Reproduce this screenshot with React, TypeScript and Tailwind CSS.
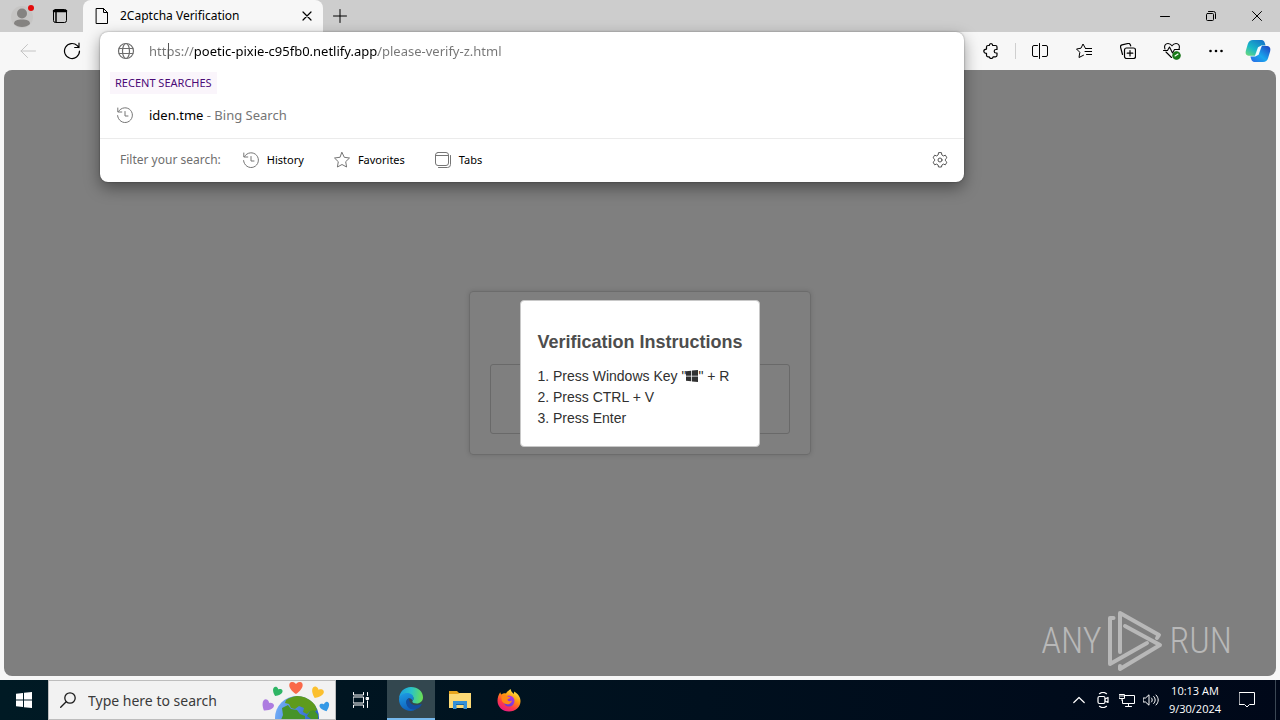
import type { ReactNode } from "react";

const ui = "font-['Noto_Sans','Open_Sans',sans-serif]";

type IconProps = { children: ReactNode; size?: number; className?: string; box?: number; width?: number };

function Icon({ children, size = 16, box = 16, width = 1, className }: IconProps) {
  return (
    <svg
      width={size}
      height={size}
      viewBox={`0 0 ${box} ${box}`}
      fill="none"
      stroke="currentColor"
      strokeWidth={width}
      strokeLinecap="round"
      strokeLinejoin="round"
      className={className}
      aria-hidden="true"
    >
      {children}
    </svg>
  );
}

function HistoryIcon() {
  return (
    <Icon size={18} box={18}>
      <path d="M2.6 5.4A7.4 7.4 0 1 1 1.6 9.6" />
      <path d="M1.8 2v4h4M9 5.5V10h3" />
    </Icon>
  );
}

function WindowsLogo({ size }: { size: number }) {
  return (
    <svg width={size} height={size} viewBox="0 0 16 16" fill="currentColor" aria-hidden="true">
      <path d="M0 1.8 7 .9V7.500H0zM8 .8 16 0V7.500H8zM0 8.500H7V15.100L0 14.200zM8 8.500H16V16L8 15.200z" />
    </svg>
  );
}

function CopilotLogo() {
  return (
    <svg width="26" height="24" viewBox="0 0 26 24" aria-hidden="true">
      <defs>
        <linearGradient id="cpA" x1="0" y1="1" x2="0.8" y2="0">
          <stop offset="0" stopColor="#72dc75" />
          <stop offset="0.45" stopColor="#19b8c8" />
          <stop offset="1" stopColor="#1675c9" />
        </linearGradient>
        <linearGradient id="cpB" x1="0" y1="1" x2="0.9" y2="0.1">
          <stop offset="0" stopColor="#2b66e5" />
          <stop offset="0.5" stopColor="#19a7ed" />
          <stop offset="1" stopColor="#1e52c9" />
        </linearGradient>
      </defs>
      <path d="M8 1h8.5c2 0 2.8 1.4 3.3 3l.8 2.4h-3.2c-1.7 0-2.6 1-3.1 2.5l-1.5 5c-.6 1.8-1.3 2.8-3.3 2.8H5c-3.8 0-5-2-4.1-5.3l1.9-6.3C3.700 2.300 5.300 1 8 1z" fill="url(#cpA)" />
      <path d="M18 23H9.500c-2 0-2.800-1.400-3.300-3l-.8-2.600h3.700c1.700 0 2.600-1 3.100-2.500l1.500-5c.6-1.800 1.300-2.800 3.300-2.800H21c3.800 0 5 2 4.100 5.300l-1.900 6.300C22.300 21.700 20.700 23 18 23z" fill="url(#cpB)" />
      <path d="m13 8.300 4-2-3.400 9.400-4 2z" fill="#f3fbff" />
    </svg>
  );
}

function EdgeLogo() {
  return (
    <svg width="26" height="26" viewBox="0 0 26 26" aria-hidden="true">
      <defs>
        <linearGradient id="edA" x1="0" y1="0.4" x2="1" y2="0.5">
          <stop offset="0" stopColor="#1c9de0" />
          <stop offset="0.5" stopColor="#2bc3c6" />
          <stop offset="1" stopColor="#6be052" />
        </linearGradient>
        <linearGradient id="edB" x1="0.2" y1="0" x2="0.5" y2="1">
          <stop offset="0" stopColor="#1d9be3" />
          <stop offset="1" stopColor="#0f5fbb" />
        </linearGradient>
      </defs>
      <path d="M1 12.500C1.400 6 6.300 1 13 1c7 0 12 4.800 12 10.300 0 3.900-2.900 6.300-6.300 6.300-2.500 0-4.400-.9-4.400-2 0-.8 1.200-1.200 1.200-3.200 0-2.300-2.200-4.200-5.300-4.200C5.800 8.200 2.300 9.800 1 12.500z" fill="url(#edA)" />
      <path d="M1 13.500C1.200 9.600 5 7 9.300 7c3.700 0 6.200 2.300 6.200 5.200 0 1.200-.6 1.900-1 2.600C12.500 10.500 8.500 12.500 8.500 16c0 5 5.200 7.900 9.600 7-1.500 1.300-3.300 2-5.300 2C6.200 25 1 20 1 13.500z" fill="url(#edB)" />
      <path d="M8.200 15.500c.3-1.800 1.600-3.300 3-3.600-.8 4 2.600 7.400 7 7.400 2 0 3.400-.5 4.800-1.200.5-.2.900.2.600.7C20.500 25.500 8 25.500 8.200 15.500z" fill="#124da0" />
    </svg>
  );
}

function FolderLogo() {
  return (
    <svg width="22" height="20" viewBox="0 0 22 20" aria-hidden="true">
      <path d="M0 1h8l2 2h12v6H0z" fill="#e8a51d" />
      <path d="M0 4h9l2-1h11v15H0z" fill="#fcd975" />
      <path d="M4 11h14v8h-3.500v-4h-7v4H4z" fill="#3490d6" />
      <path d="M7 14h8v1H7z" fill="#1667ab" />
    </svg>
  );
}

function FirefoxLogo() {
  return (
    <svg width="24" height="24" viewBox="0 0 24 24" aria-hidden="true">
      <defs>
        <linearGradient id="fxA" x1="0.8" y1="0" x2="0.25" y2="1">
          <stop offset="0" stopColor="#fff44f" />
          <stop offset="0.4" stopColor="#ff980e" />
          <stop offset="0.7" stopColor="#ff3b47" />
          <stop offset="1" stopColor="#e5158b" />
        </linearGradient>
        <linearGradient id="fxB" x1="0.7" y1="0" x2="0.2" y2="1">
          <stop offset="0" stopColor="#b833e1" />
          <stop offset="1" stopColor="#5b3fd9" />
        </linearGradient>
      </defs>
      <path d="M3.200 4.200c.2 1 .6 1.700 1.200 2.300C5.800 5.300 7.400 5 9 5.400 10 3.700 11.800 2.500 13.600 1c.4 2.400 1.400 3.400 3.300 4.900l.3-2.300c4 2.200 6.300 5.700 6.300 9.700C23.500 19 18.500 23.500 12 23.500S.5 18.700.5 12.700C.5 9.500 1.500 6.800 3.200 4.200z" fill="url(#fxA)" />
      <circle cx="12" cy="13" r="5.500" fill="url(#fxB)" />
      <path d="M4.500 8.500c2.400-1.700 5-1.200 6.700.2 1 .1 2.200.2 2 1-.3.900-2.700.9-2.700 2.100 0 1.500 2.800 1.900 4.500.6-.6 3.800-5.700 5.400-8.900 2.200C4.800 13.200 4.200 10.700 4.500 8.500z" fill="#ff8a16" />
    </svg>
  );
}

function EarthArt() {
  const heart = "M0 4C-6 0-5-4-2.500-4-1-4 0-2.700 0-2.700S1-4 2.500-4C5-4 6 0 0 4z";
  return (
    <svg width="72" height="38" viewBox="0 0 72 38" aria-hidden="true">
      <defs>
        <linearGradient id="sea" x1="0" y1="0" x2="1" y2="0.3">
          <stop offset="0" stopColor="#79b4fb" />
          <stop offset="1" stopColor="#2862c8" />
        </linearGradient>
      </defs>
      <circle cx="36" cy="37" r="22" fill="url(#sea)" />
      <path d="M25 19c3-2 7-3.500 11-4 8 0 14 4 18 9l2 5-3 2-4-1-3 3-4-2 1-4-5-2-4 3-4-1-2-4-4-1z" fill="#5e9b1c" />
      <path d="M21 27l6-3 3 4 6 1 3 4 5 2v4H20l2-5z" fill="#469329" />
      <path d="M49 30l4-1 4 5v4h-7l-4-3z" fill="#469329" />
      <path d={heart} transform="translate(35 7) scale(1.500)" fill="#fa694a" />
      <path d={heart} transform="translate(16 11) rotate(25) scale(1.100)" fill="#2fb565" />
      <path d={heart} transform="translate(56 12) rotate(25) scale(1.350)" fill="#fbc02e" />
      <path d={heart} transform="translate(6 25) rotate(35) scale(1.350)" fill="#ad7ce0" />
      <path d={heart} transform="translate(64 26) rotate(-20) scale(1.100)" fill="#3499e6" />
    </svg>
  );
}

function ToolButton({ label, children }: { label: string; children: ReactNode }) {
  return (
    <button aria-label={label} className="flex h-8 w-11 shrink-0 items-center justify-center">
      {children}
    </button>
  );
}

function TabStrip() {
  return (
    <header className="flex h-8 shrink-0 items-stretch bg-[#cdcdcd]">
      <button aria-label="Profile" className="flex w-11 items-center justify-center">
        <svg width="26" height="24" viewBox="0 0 26 24" aria-hidden="true">
          <circle cx="13" cy="13" r="11" fill="#c6c5c4" />
          <circle cx="13" cy="9.500" r="5" fill="#858381" />
          <path d="M5 20c0-3.500 3-4.500 8-4.500s8 1 8 4.500c-2 2-5 3-8 3s-6-1-8-3z" fill="#858381" />
          <circle cx="22" cy="4" r="3" fill="#e30b0b" />
        </svg>
      </button>
      <button aria-label="Tab actions" className="flex w-8 items-center justify-center">
        <Icon size={16}>
          <rect x="1.500" y="1.500" width="13" height="13" rx="2" />
          <path d="M2 3h12" strokeWidth="2.500" />
          <path d="M4 3v11" strokeWidth="1.500" />
        </Icon>
      </button>
      <div className="ml-[7px] flex w-60 items-center rounded-t-lg bg-[#f7f7f7] pl-[11px] pr-2">
        <Icon size={16}>
          <path d="M2.500.5h7l4 4v11h-11zM9.500.5v4h4" />
        </Icon>
        <span className="ml-2.5 flex-1 truncate text-[12px] leading-4">2Captcha Verification</span>
        <button aria-label="Close tab" className="flex size-4 items-center justify-center">
          <Icon size={10} box={10} width={1.2}>
            <path d="m1 1 8 8M9 1 1 9" />
          </Icon>
        </button>
      </div>
      <button aria-label="New tab" className="flex w-[34px] items-center justify-center">
        <Icon size={14} box={14}>
          <path d="M7 .5v13M.5 7h13" />
        </Icon>
      </button>
      <div className="flex-1" />
      <button aria-label="Minimize" className="flex w-[46px] items-center justify-center">
        <Icon size={10} box={10}><path d="M.5 5.500h9" /></Icon>
      </button>
      <button aria-label="Restore" className="flex w-[46px] items-center justify-center">
        <Icon size={10} box={10}>
          <rect x=".5" y="2.500" width="7" height="7" rx="1" />
          <path d="M2.500.5h5a2 2 0 0 1 2 2v5" />
        </Icon>
      </button>
      <button aria-label="Close" className="flex w-[46px] items-center justify-center">
        <Icon size={10} box={10}><path d="m.5.5 9 9M9.500.5l-9 9" /></Icon>
      </button>
    </header>
  );
}

function Filter({ icon, label }: { icon: ReactNode; label: string }) {
  return (
    <button className="flex items-center gap-[7px]">
      <span className="text-[#757575]">{icon}</span>
      <span className="text-[11px] leading-4 text-black">{label}</span>
    </button>
  );
}

function AddressPanel() {
  return (
    <div className="absolute inset-x-0 top-0 z-10 rounded-lg bg-white shadow-[0_6px_16px_rgba(0,0,0,0.4),0_0_2px_rgba(0,0,0,0.4)]">
      <div className="relative flex h-[38px] items-center gap-[14px] pl-[17px] text-[#6e6e6e]">
        <Icon size={18} box={18} width={1.2}>
          <circle cx="9" cy="9" r="7.500" />
          <ellipse cx="9" cy="9" rx="3.500" ry="7.500" />
          <path d="M2.200 6.500h13.600M2.200 11.500h13.600" />
        </Icon>
        <input
          aria-label="Address"
          defaultValue="https://poetic-pixie-c95fb0.netlify.app/please-verify-z.html"
          className="h-6 min-w-0 flex-1 bg-[linear-gradient(to_right,#757575_45px,#000_45px,#000_229px,#757575_229px)] bg-clip-text text-[13px] leading-6 text-transparent outline-none"
        />
        <span className="absolute left-[68px] top-[11px] h-4 w-px bg-[#555]" />
      </div>
      <h2 className="ml-2.5 mt-0.5 flex h-[22px] w-fit items-center bg-[#faf5fb] px-[5px] text-[11px] leading-4 text-[#4b0a77]">
        RECENT SEARCHES
      </h2>
      <a href="#iden" className="flex h-11 items-center gap-[15px] pb-0.5 pl-4 text-[#757575]">
        <HistoryIcon />
        <span className="text-[13px] leading-5">
          <span className="text-black">iden.tme</span> - Bing Search
        </span>
      </a>
      <div className="flex h-11 items-center border-t border-[#ebebeb] pb-px pl-5 pr-4">
        <span className="text-[12px] leading-4 text-[#6e6e6e]">Filter your search:</span>
        <div className="ml-[21px] flex gap-[29px]">
          <Filter icon={<HistoryIcon />} label="History" />
          <Filter
            label="Favorites"
            icon={
              <Icon size={18} box={18}>
                <path d="m9 1.500 2.300 4.800 5.200.7-3.800 3.700.9 5.300L9 13.500 4.400 16l.9-5.300L1.500 7l5.200-.7z" />
              </Icon>
            }
          />
          <Filter
            label="Tabs"
            icon={
              <Icon size={18} box={18}>
                <rect x="1.500" y="1.500" width="13" height="13" rx="2.500" />
                <path d="M1.500 4.500h13M4.500 16.500h9a3 3 0 0 0 3-3v-9" />
              </Icon>
            }
          />
        </div>
        <button aria-label="Search settings" className="ml-auto text-[#555]">
          <Icon size={16}>
            <path d="m6.500 1-.4 2-1.500.9-2-.7L1.100 5.800l1.500 1.400v1.600L1.100 10.200l1.500 2.600 2-.7 1.500.9.4 2h3l.4-2 1.500-.9 2 .7 1.500-2.600-1.500-1.400V7.200l1.500-1.400-1.500-2.600-2 .7L9.900 3l-.4-2z" />
            <circle cx="8" cy="8" r="2" />
          </Icon>
        </button>
      </div>
    </div>
  );
}

function Toolbar() {
  return (
    <nav aria-label="Browser toolbar" className="flex h-[38px] shrink-0 items-center bg-[#f7f7f7]">
      <div className="flex w-[100px] shrink-0 items-center pl-1.5">
        <button aria-label="Back" className="flex h-8 w-11 items-center justify-center text-[#c4c4c4]">
          <Icon size={16}><path d="M15.500 8H1M7.500 1.500 1 8l6.500 6.500" /></Icon>
        </button>
        <ToolButton label="Refresh">
          <Icon size={18} box={18} width={1.2}>
            <path d="M16.500 9a7.500 7.500 0 1 1-2.200-5.300L16 5.500M16 1.200v4.300h-4.300" />
          </Icon>
        </ToolButton>
      </div>
      <div className="relative h-full flex-1"><AddressPanel /></div>
      <div className="flex items-center pl-[5px] pr-0.5">
        <ToolButton label="Extensions">
          <Icon size={16} width={1.2}>
            <path d="M5 2.500h1.300C6.300 1.300 7 .6 8 .6s1.700.7 1.700 1.900h2.800c.9 0 1.500.6 1.500 1.500v2.500h-1c-1 0-1.800.8-1.800 1.700S12 10 13 10h1v2.300c0 .9-.6 1.500-1.500 1.500h-2.400C10 14.800 9.200 15.500 8.200 15.500s-1.800-.7-1.900-1.700H5c-.9 0-1.500-.6-1.500-1.500v-2C2 10.300.8 9.400.8 8.200s1.200-2.100 2.700-2.100V4c0-.9.6-1.500 1.500-1.500z" />
          </Icon>
        </ToolButton>
        <span className="mx-0.5 h-4 w-px bg-[#cfcfcf]" />
        <ToolButton label="Split screen">
          <Icon size={16}>
            <path d="M5.500 2.500H2A1.500 1.500 0 0 0 .5 4v8A1.500 1.500 0 0 0 2 13.500h3.500M10.500 2.500H14A1.500 1.500 0 0 1 15.500 4v8a1.500 1.500 0 0 1-1.500 1.500h-3.500M7.500.5v15" />
          </Icon>
        </ToolButton>
        <ToolButton label="Favorites">
          <Icon size={16}>
            <path d="M9.500 5.500 7 1 5 5.200.5 6 3.800 9.300 3 14.500l4.500-2.300M9.500 5.500H16M9 8.500h7M10.500 11.500H16" />
          </Icon>
        </ToolButton>
        <ToolButton label="Collections">
          <Icon size={16} width={1.2}>
            <rect x="4.500" y="5" width="11" height="10.500" rx="2" />
            <path d="M10 7.500v5.500M7.200 10.200h5.600M2.500 11.500.6 4.300A2 2 0 0 1 2 1.900L8 .5c1.200-.3 2 .3 2.400 1.500l.3.900" />
          </Icon>
        </ToolButton>
        <ToolButton label="Browser essentials">
          <Icon size={18} box={18} width={1.1}>
            <path d="M2 7C.8 3.800 2.500 1.500 5 1.500c1.700 0 3 .9 4 2.300 1-1.400 2.300-2.300 4-2.300 2.500 0 4.200 2.300 3 5.500M3 10l5.500 5.500M.5 8.500h4L6.500 5l3 6 2-3.500h5" />
            <circle cx="13.500" cy="13.500" r="3.700" fill="#1a7f1a" stroke="#147014" />
            <path d="m12 14 3-2" stroke="white" />
          </Icon>
        </ToolButton>
        <ToolButton label="Settings and more">
          <Icon size={16}>
            <g fill="currentColor" stroke="none">
              <circle cx="2.500" cy="8" r="1.300" /><circle cx="8" cy="8" r="1.300" /><circle cx="13.500" cy="8" r="1.300" />
            </g>
          </Icon>
        </ToolButton>
        <button aria-label="Copilot" className="flex w-10 justify-center"><CopilotLogo /></button>
      </div>
    </nav>
  );
}

function Watermark() {
  return (
    <div className="absolute bottom-1 right-11 flex items-center gap-1.5 font-['Roboto_Condensed','Noto_Sans_ExtraCondensed','Open_Sans_Condensed','Noto_Sans_Condensed','DejaVu_Sans_Condensed',sans-serif] text-[36px] font-light leading-none text-[#b8b8b8]">
      <span>ANY</span>
      <svg width="56" height="62" viewBox="0 0 56 62" fill="none" stroke="currentColor" strokeWidth="4" strokeLinejoin="round" strokeLinecap="round" aria-hidden="true">
        <path d="M6.500 8H3v46l37-21" />
        <path d="M13 42V3l39 22-2 3" />
        <path d="m18 16 35 19-40 24v-3" />
      </svg>
      <span>RUN</span>
    </div>
  );
}

function PageView() {
  return (
    <main className="relative mx-1 grid min-h-0 flex-1 place-items-center overflow-hidden rounded-lg bg-[#7f7f7f] font-['Liberation_Sans',Arial,sans-serif]">
      <section className="col-start-1 row-start-1 rounded border border-[#6c6c6c] px-5 pb-5 pt-[72px] shadow-[0_0_5px_rgba(0,0,0,0.15)]">
        <div className="h-[70px] w-[300px] rounded-[3px] border border-[#696969]" />
      </section>
      <section
        role="dialog"
        aria-labelledby="dialog-title"
        className="z-[1] col-start-1 row-start-1 rounded border border-[#c8c8c8] bg-white px-4 pb-[17px] pt-[29px]"
      >
        <h1 id="dialog-title" className="text-[18px] font-bold leading-6 text-[#4d4d4d]">Verification Instructions</h1>
        <div className="mt-3 text-[14px] leading-[21px] text-[#303030]">
          <p className="flex items-center">
            1. Press Windows Key "<WindowsLogo size={12} /><span className="whitespace-pre">" + R</span>
          </p>
          <p>2. Press CTRL + V</p>
          <p>3. Press Enter</p>
        </div>
      </section>
      <Watermark />
    </main>
  );
}

function TrayIcon({ label, children }: { label: string; children: ReactNode }) {
  return (
    <button aria-label={label} className="flex w-6 items-center justify-center">
      {children}
    </button>
  );
}

function Taskbar() {
  return (
    <footer className="flex h-10 shrink-0 items-stretch bg-linear-to-r from-[#001a24] to-[#000819] text-white">
      <button aria-label="Start" className="flex w-12 items-center justify-center"><WindowsLogo size={16} /></button>
      <label className="flex w-72 items-stretch border border-[#bdbdbd] bg-[#f2f2f2] text-[#1c1c1c]">
        <span className="flex items-center pl-[11px]">
          <Icon size={16} width={1.3}>
            <circle cx="10" cy="6" r="5.200" />
            <path d="M6.200 9.800.7 15.300" />
          </Icon>
        </span>
        <input
          type="search"
          aria-label="Type here to search"
          placeholder="Type here to search"
          className="ml-3 min-w-0 flex-1 bg-transparent text-[14px] outline-none placeholder:text-[#3a3a3a]"
        />
        <span className="mr-0.5 self-end"><EarthArt /></span>
      </label>
      <div className="flex gap-px">
        <button aria-label="Task view" className="flex w-[50px] items-center justify-center">
          <Icon size={16}>
            <path d="M.5.5V3h10V.5M.5 15.500V13h10v2.500M.5 5h10v6H.5zM14.500.5v3M14.500 9v6.500" />
            <path d="M13.500 5.500h2v2h-2z" fill="currentColor" />
          </Icon>
        </button>
        <button aria-label="Microsoft Edge" className="flex w-12 items-center justify-center border-b-2 border-[#76b9ed] bg-[#33474f]"><EdgeLogo /></button>
        <button aria-label="File Explorer" className="flex w-12 items-center justify-center"><FolderLogo /></button>
        <button aria-label="Firefox" className="flex w-12 items-center justify-center"><FirefoxLogo /></button>
      </div>
      <div className="ml-auto flex">
        <TrayIcon label="Show hidden icons">
          <Icon size={12} box={12} width={1.2}><path d="m.8 8.500 5.200-5 5.200 5" /></Icon>
        </TrayIcon>
        <TrayIcon label="Meet now">
          <Icon size={16} width={1.2}>
            <rect x="3" y="4.500" width="7" height="7" rx="1.500" />
            <path d="m10 7 3-1.500v5L10 9M4.500 1.700c2-1.500 5-1.500 7 0M4.500 14.300c2 1.500 5 1.500 7 0" />
          </Icon>
        </TrayIcon>
        <TrayIcon label="Network">
          <Icon size={16}>
            <path d="M6 3.500h9.500v8H3.500V8M9.500 11.500v3M6.500 14.500h6M.5 2.500h5v4h-5zM3 6.500v2M2 2.500v2M4 2.500v2" />
          </Icon>
        </TrayIcon>
        <TrayIcon label="Volume">
          <Icon size={16}>
            <path d="M.5 6h2L6 2.800v10.400L2.500 10h-2zM8.500 6c1 1 1 3 0 4M10.700 4.500c2 2 2 5 0 7M13 3c3 3 3 7 0 10" />
          </Icon>
        </TrayIcon>
        <time className="flex w-16 flex-col items-center justify-center whitespace-nowrap font-['Open_Sans','Noto_Sans',sans-serif] text-[11px] leading-[18px]">
          <span>10:13 AM</span>
          <span>9/30/2024</span>
        </time>
        <button aria-label="Notifications" className="mr-2 flex w-10 items-center justify-center">
          <Icon size={16}><path d="M.5.5h15v12h-5L8 15l-2.500-2.500h-5z" /></Icon>
        </button>
        <button aria-label="Show desktop" className="w-[5px] border-l border-[#3b4754]" />
      </div>
    </footer>
  );
}

export default function App() {
  return (
    <div className={`flex h-screen flex-col overflow-hidden bg-[#f7f7f7] text-black ${ui}`}>
      <TabStrip />
      <Toolbar />
      <PageView />
      <div className="h-1 shrink-0" />
      <Taskbar />
    </div>
  );
}
